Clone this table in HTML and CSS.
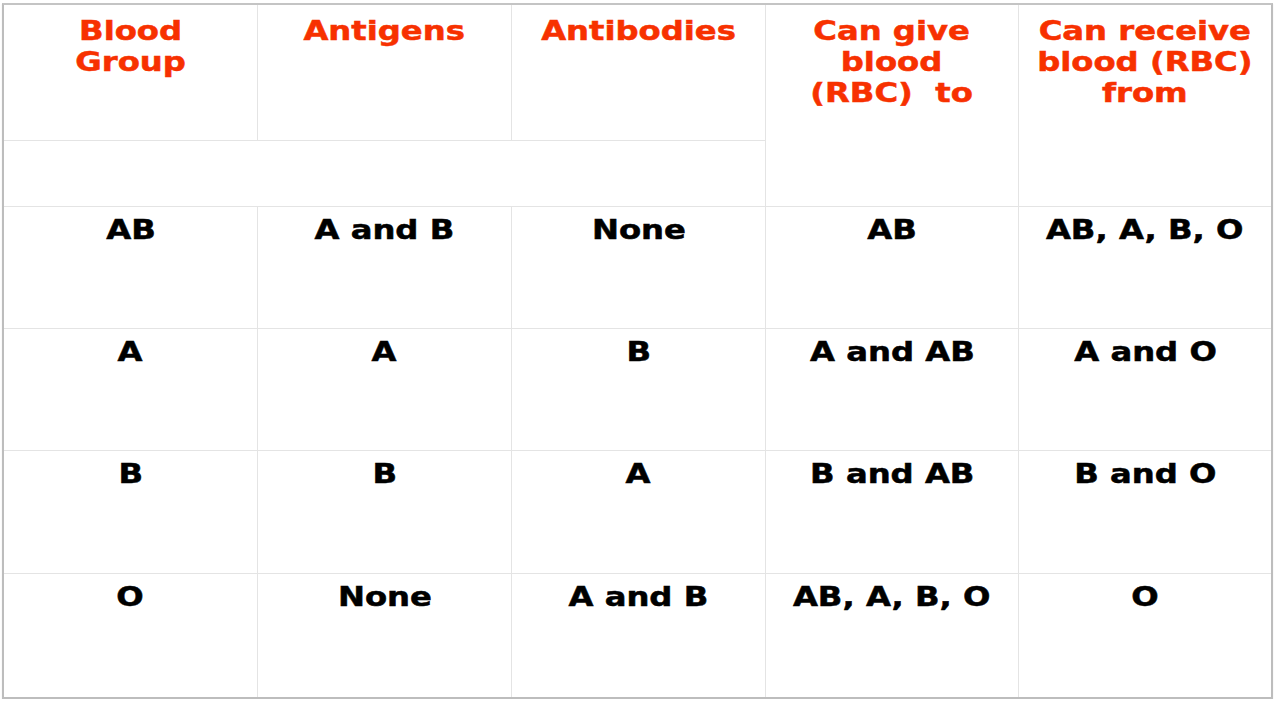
FILE: index.html
```html
<!DOCTYPE html>
<html lang="en">
<head>
<meta charset="utf-8">
<title>Blood Groups</title>
<link rel="stylesheet" href="styles.css">
</head>
<body>
<div class="frame">
  <div class="grid">
    <div class="cell head c1"><span class="t">Blood<br>Group</span></div>
    <div class="cell head c2"><span class="t">Antigens</span></div>
    <div class="cell head c3"><span class="t">Antibodies</span></div>
    <div class="cell head c4 tall"><span class="t">Can give<br>blood<br>(RBC)&nbsp; to</span></div>
    <div class="cell head c5 tall last"><span class="t">Can receive<br>blood (RBC)<br>from</span></div>
    <div class="cell spacer"></div>

    <div class="cell"><span class="t">AB</span></div>
    <div class="cell"><span class="t">A and B</span></div>
    <div class="cell"><span class="t">None</span></div>
    <div class="cell"><span class="t">AB</span></div>
    <div class="cell last"><span class="t">AB, A, B, O</span></div>

    <div class="cell"><span class="t">A</span></div>
    <div class="cell"><span class="t">A</span></div>
    <div class="cell"><span class="t">B</span></div>
    <div class="cell"><span class="t">A and AB</span></div>
    <div class="cell last"><span class="t">A and O</span></div>

    <div class="cell"><span class="t">B</span></div>
    <div class="cell"><span class="t">B</span></div>
    <div class="cell"><span class="t">A</span></div>
    <div class="cell"><span class="t">B and AB</span></div>
    <div class="cell last"><span class="t">B and O</span></div>

    <div class="cell bottom"><span class="t">O</span></div>
    <div class="cell bottom"><span class="t">None</span></div>
    <div class="cell bottom"><span class="t">A and B</span></div>
    <div class="cell bottom"><span class="t">AB, A, B, O</span></div>
    <div class="cell bottom last"><span class="t">O</span></div>
  </div>
</div>
</body>
</html>
```

FILE: styles.css
```css
html, body {
  margin: 0;
  padding: 0;
  background: #ffffff;
}

body {
  font-family: "DejaVu Sans", Verdana, sans-serif;
  font-weight: bold;
  font-size: 26px;
  line-height: 30px;
  color: #000000;
}

.frame {
  margin: 3px 0 0 2px;
  width: 1271px;
  height: 696px;
  box-sizing: border-box;
  border: 2px solid #bdbdbd;
  border-top-color: #c4c4c4;
  box-shadow: 0 1px 1px rgba(0,0,0,0.12);
}

.grid {
  display: grid;
  grid-template-columns: 254px 254px 254px 253px 252px;
  grid-template-rows: 136px 66px 122px 122px 123px 123px;
  height: 100%;
}

.cell {
  box-sizing: border-box;
  border-right: 1px solid #e4e4e4;
  border-bottom: 1px solid #e4e4e4;
  text-align: center;
  padding-top: 8px;
  white-space: nowrap;
  overflow: hidden;
  -webkit-text-stroke: 0.5px currentColor;
}

.cell.last {
  border-right: none;
}

.cell.bottom {
  border-bottom: none;
}

.head {
  color: #f73100;
  line-height: 31px;
  padding-top: 11px;
}

.tall {
  grid-row: span 2;
}

.spacer {
  grid-column: span 3;
}

.t {
  display: inline-block;
  transform: scaleX(1.24);
  transform-origin: center top;
}
```
